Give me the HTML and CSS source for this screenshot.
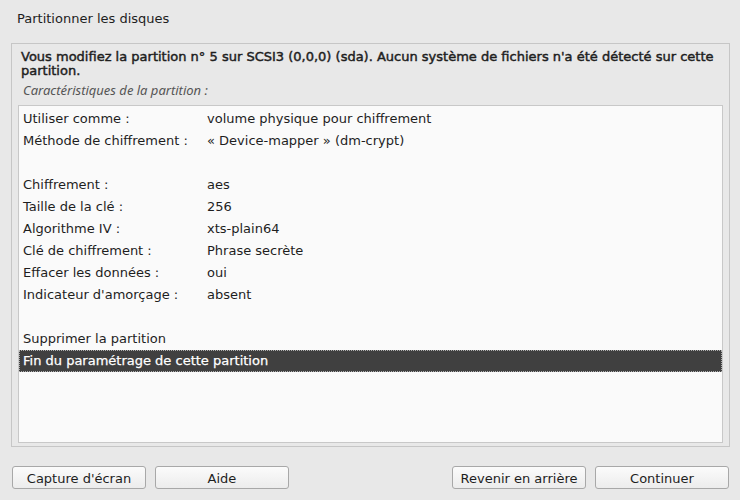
FILE: index.html
```html
<!DOCTYPE html>
<html lang="fr">
<head>
<meta charset="utf-8">
<link rel="stylesheet" href="styles.css">
</head>
<body>
<div class="window">
  <div class="title">Partitionner les disques</div>
  <div class="frame">
    <div class="heading">Vous modifiez la partition n° 5 sur SCSI3 (0,0,0) (sda). Aucun système de fichiers n'a été détecté sur cette partition.</div>
    <div class="subtitle">Caractéristiques de la partition :</div>
    <div class="list">
      <div class="row"><span class="key">Utiliser comme :</span><span class="val">volume physique pour chiffrement</span></div>
      <div class="row"><span class="key">Méthode de chiffrement :</span><span class="val">« Device-mapper » (dm-crypt)</span></div>
      <div class="row"></div>
      <div class="row"><span class="key">Chiffrement :</span><span class="val">aes</span></div>
      <div class="row"><span class="key">Taille de la clé :</span><span class="val">256</span></div>
      <div class="row"><span class="key">Algorithme IV :</span><span class="val">xts-plain64</span></div>
      <div class="row"><span class="key">Clé de chiffrement :</span><span class="val">Phrase secrète</span></div>
      <div class="row"><span class="key">Effacer les données :</span><span class="val">oui</span></div>
      <div class="row"><span class="key">Indicateur d'amorçage :</span><span class="val">absent</span></div>
      <div class="row"></div>
      <div class="row"><span class="key">Supprimer la partition</span></div>
      <div class="row selected"><span class="key">Fin du paramétrage de cette partition</span></div>
    </div>
  </div>
  <div class="buttons">
    <div class="group">
      <button class="btn">Capture d'écran</button>
      <button class="btn">Aide</button>
    </div>
    <div class="group">
      <button class="btn">Revenir en arrière</button>
      <button class="btn">Continuer</button>
    </div>
  </div>
</div>
</body>
</html>
```

FILE: styles.css
```css
html, body {
  margin: 0;
  padding: 0;
  background: #e8e8e8;
}
body {
  width: 740px;
  height: 500px;
  font-family: "DejaVu Sans", sans-serif;
  font-size: 13px;
  color: #1e1e1e;
}
.window {
  display: flex;
  flex-direction: column;
  height: 500px;
}
.title {
  padding: 11px 0 0 17px;
  height: 43px;
  box-sizing: border-box;
  line-height: 16px;
}
.frame {
  margin: 0 10px 0 11px;
  border: 1px solid #c6c6c6;
  height: 404px;
  box-sizing: border-box;
  padding: 6px 6px 3px 6px;
  display: flex;
  flex-direction: column;
}
.heading {
  line-height: 14px;
  padding-left: 3px;
  padding-right: 8px;
  -webkit-text-stroke: 0.45px #1e1e1e;
  color: #1e1e1e;
}
.subtitle {
  font-family: "Noto Sans", sans-serif;
  font-style: italic;
  font-size: 13px;
  color: #555;
  line-height: 18px;
  padding: 3px 0 0 5px;
  height: 27px;
  box-sizing: border-box;
}
.list {
  flex: 1;
  background: #fafafa;
  border: 1px solid #c8c8c8;
  padding: 2px 0 0 0;
}
.row {
  height: 22px;
  line-height: 22px;
  display: flex;
  padding-left: 4px;
  box-sizing: border-box;
}
.key {
  width: 184px;
  white-space: nowrap;
}
.val {
  white-space: nowrap;
}
.row.selected {
  background: #404040;
  color: #ffffff;
  outline: 1px dotted #b0b0b0;
  outline-offset: -1px;
  -webkit-text-stroke: 0.25px #ffffff;
}
.buttons {
  display: flex;
  justify-content: space-between;
  padding: 19px 11px 0 12px;
}
.group {
  display: flex;
  gap: 9px;
}
.btn {
  width: 134px;
  height: 23px;
  font-family: "DejaVu Sans", sans-serif;
  font-size: 13px;
  color: #1e1e1e;
  border: 1px solid #a8a8a8;
  border-radius: 3px;
  background: linear-gradient(#fbfbfb, #ececec);
  padding: 1px 0 0 0;
}
```
